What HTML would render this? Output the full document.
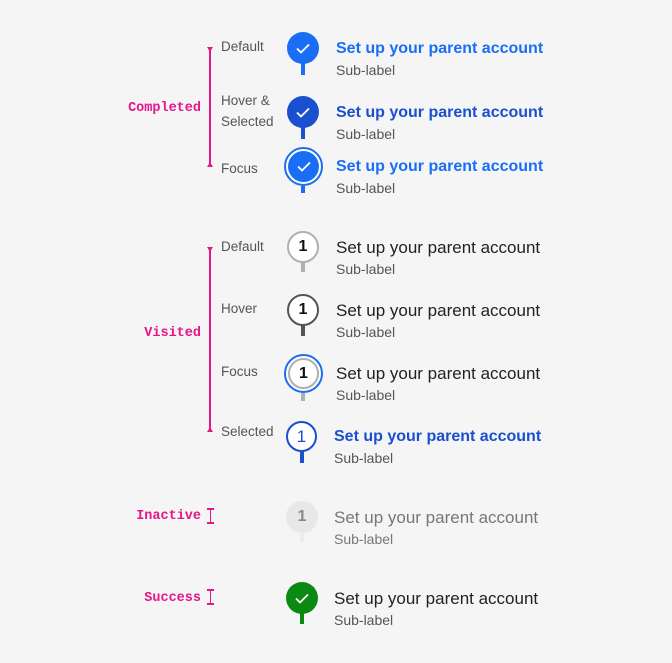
<!DOCTYPE html>
<html><head><meta charset="utf-8"><style>
body{margin:0;width:672px;height:663px;background:#f5f5f5;position:relative;overflow:hidden;font-family:"Liberation Sans",sans-serif}
.a{position:absolute;white-space:nowrap}
.cat{font-family:"Liberation Mono",monospace;font-weight:bold;font-size:13.5px;color:#e3168a;text-align:right;width:120px;left:81px}
.st{font-size:13.5px;color:#555;left:221px;line-height:21px}
.lab{font-size:17px;color:#222;left:336px}
.lab.b{color:#1a6ef5;font-weight:bold;font-size:16px}
.lab.d{color:#1a4fd0;font-weight:bold;font-size:16px}
.sub{font-size:14px;color:#555;left:336px}
.c{position:absolute;border-radius:50%;box-sizing:border-box;display:flex;align-items:center;justify-content:center;font-weight:bold;font-size:16px}
.s{position:absolute;width:4px}
.vl{position:absolute;width:1.5px;background:#e3168a}
.tri{position:absolute;width:0;height:0;border-left:3px solid transparent;border-right:3px solid transparent}
</style></head><body>
<div class="vl" style="left:209px;top:48px;height:118px"></div>
<div class="tri" style="left:207px;top:47px;border-top:5px solid #e3168a"></div>
<div class="tri" style="left:207px;top:162px;border-bottom:5px solid #e3168a"></div>
<div class="vl" style="left:209px;top:248px;height:183px"></div>
<div class="tri" style="left:207px;top:247px;border-top:5px solid #e3168a"></div>
<div class="tri" style="left:207px;top:427px;border-bottom:5px solid #e3168a"></div>
<div class="vl" style="left:209.5px;top:509px;height:14px;width:1.5px"></div>
<div class="a" style="left:207px;top:508px;width:7px;height:2px;background:#e3168a"></div>
<div class="a" style="left:207px;top:522px;width:7px;height:2px;background:#e3168a"></div>
<div class="vl" style="left:209.5px;top:590px;height:14px;width:1.5px"></div>
<div class="a" style="left:207px;top:589px;width:7px;height:2px;background:#e3168a"></div>
<div class="a" style="left:207px;top:603px;width:7px;height:2px;background:#e3168a"></div>

<div class="a cat" style="top:101px">Completed</div>
<div class="a cat" style="top:326px">Visited</div>
<div class="a cat" style="top:509px">Inactive</div>
<div class="a cat" style="top:591px">Success</div>

<div class="a st" style="top:36px">Default</div>
<div class="a st" style="top:90px">Hover &amp;<br>Selected</div>
<div class="a st" style="top:158px">Focus</div>
<div class="a st" style="top:236px">Default</div>
<div class="a st" style="top:298px">Hover</div>
<div class="a st" style="top:361px">Focus</div>
<div class="a st" style="top:421px">Selected</div>

<div class="c" style="left:287px;top:32px;width:32px;height:32px;background:#1a6ef5"><svg width="16" height="13" viewBox="0 0 16 13"><path d="M2 6.5l4 4L14 2.5" fill="none" stroke="#fff" stroke-width="1.8"/></svg></div>
<div class="s" style="left:301px;top:63px;height:12px;background:#1a6ef5"></div>
<div class="a lab b" style="top:40px">Set up your parent account</div>
<div class="a sub" style="top:62px">Sub-label</div>

<div class="c" style="left:287px;top:96px;width:32px;height:32px;background:#1a4fd0"><svg width="16" height="13" viewBox="0 0 16 13"><path d="M2 6.5l4 4L14 2.5" fill="none" stroke="#fff" stroke-width="1.8"/></svg></div>
<div class="s" style="left:301px;top:127px;height:12px;background:#1a4fd0"></div>
<div class="a lab d" style="top:104px">Set up your parent account</div>
<div class="a sub" style="top:126px">Sub-label</div>

<div class="c" style="left:284px;top:147px;width:39px;height:39px;border:2px solid #1a6ef5;background:#fff"><div class="c" style="position:static;width:31px;height:31px;background:#1a6ef5"><svg width="16" height="13" viewBox="0 0 16 13"><path d="M2 6.5l4 4L14 2.5" fill="none" stroke="#fff" stroke-width="1.8"/></svg></div></div>
<div class="s" style="left:301px;top:186px;height:7px;background:#1a6ef5"></div>
<div class="a lab b" style="top:158px">Set up your parent account</div>
<div class="a sub" style="top:180px">Sub-label</div>

<div class="c" style="left:287px;top:231px;width:32px;height:32px;border:2px solid #b0b0b0;background:#fff;color:#111">1</div>
<div class="s" style="left:301px;top:262px;height:10px;background:#b0b0b0"></div>
<div class="a lab" style="top:238px">Set up your parent account</div>
<div class="a sub" style="top:261px">Sub-label</div>

<div class="c" style="left:287px;top:294px;width:32px;height:32px;border:2px solid #555;background:#fff;color:#111">1</div>
<div class="s" style="left:301px;top:325px;height:11px;background:#555"></div>
<div class="a lab" style="top:301px">Set up your parent account</div>
<div class="a sub" style="top:324px">Sub-label</div>

<div class="c" style="left:284px;top:354px;width:39px;height:39px;border:2px solid #1a6ef5;background:#fff"><div class="c" style="position:static;width:31px;height:31px;border:2px solid #b0b0b0;color:#111">1</div></div>
<div class="s" style="left:301px;top:393px;height:8px;background:#b0b0b0"></div>
<div class="a lab" style="top:364px">Set up your parent account</div>
<div class="a sub" style="top:387px">Sub-label</div>

<div class="c" style="left:286px;top:421px;width:31px;height:31px;border:2px solid #1a4fd0;background:#fff;color:#1a4fd0;font-weight:normal;font-size:17px">1</div>
<div class="s" style="left:300px;top:451px;height:12px;background:#1a4fd0"></div>
<div class="a lab d" style="top:428px;left:334px">Set up your parent account</div>
<div class="a sub" style="top:450px;left:334px">Sub-label</div>

<div class="c" style="left:286px;top:501px;width:32px;height:32px;background:#e8e8e8;color:#888">1</div>
<div class="s" style="left:300px;top:532px;height:10px;background:#ececec"></div>
<div class="a lab" style="top:508px;left:334px;color:#777">Set up your parent account</div>
<div class="a sub" style="top:531px;left:334px;color:#777">Sub-label</div>

<div class="c" style="left:286px;top:582px;width:32px;height:32px;background:#0a8a12"><svg width="16" height="13" viewBox="0 0 16 13"><path d="M2 6.5l4 4L14 2.5" fill="none" stroke="#fff" stroke-width="1.8"/></svg></div>
<div class="s" style="left:300px;top:613px;height:11px;background:#0a8a12"></div>
<div class="a lab" style="top:589px;left:334px">Set up your parent account</div>
<div class="a sub" style="top:612px;left:334px">Sub-label</div>
</body></html>
